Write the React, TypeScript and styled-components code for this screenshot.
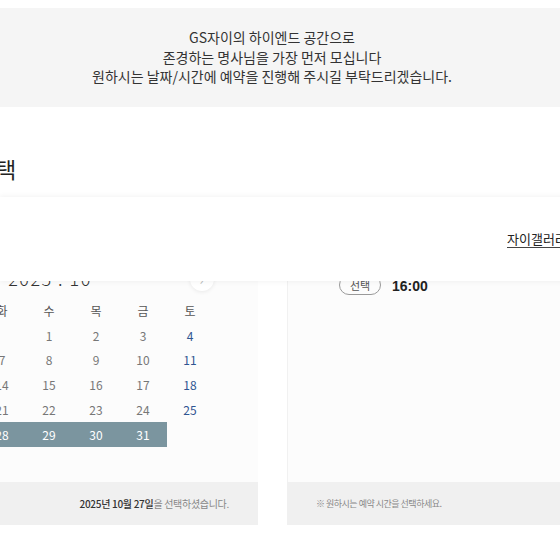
import React from "react";
import styled, { createGlobalStyle } from "styled-components";

const GlobalStyle = createGlobalStyle`
  html, body {
    margin: 0;
    padding: 0;
    background: #ffffff;
    overflow: hidden;
  }
  body {
    font-family: "Noto Sans CJK KR", "Noto Sans", sans-serif;
    color: #333;
  }
`;

const Page = styled.div`
  position: relative;
  width: 560px;
  height: 560px;
  padding-top: 8px;
  box-sizing: border-box;
  overflow: hidden;
`;

const Banner = styled.div`
  background: #f5f5f5;
  height: 99px;
  box-sizing: border-box;
  padding: 20px 16px 0 0;
  text-align: center;
  font-size: 14px;
  line-height: 19.5px;
  color: #333;
`;

const Main = styled.div`
  margin-left: -160px;
  width: 900px;
`;

const Heading = styled.h2`
  margin: 46px 0 0;
  padding-left: 45px;
  font-size: 22px;
  font-weight: 400;
  line-height: 30px;
  color: #222;
  white-space: nowrap;
`;

const Columns = styled.div`
  display: flex;
  gap: 29px;
  margin-top: 57px;
`;

const Card = styled.div<{ $width: number }>`
  width: ${(p) => p.$width}px;
  display: flex;
  flex-direction: column;
`;

const CardBody = styled.div<{ $bordered?: boolean }>`
  height: 242px;
  background: #fcfcfc;
  border-left: ${(p) => (p.$bordered ? "1px solid #f1f1f1" : "none")};
  box-sizing: border-box;
  padding-top: 24px;
`;

const CardFooter = styled.div<{ $align: "left" | "right"; $small?: boolean }>`
  height: 43px;
  background: #f0f0f0;
  display: flex;
  align-items: center;
  justify-content: ${(p) => (p.$align === "right" ? "flex-end" : "flex-start")};
  padding: 0 29px;
  font-size: ${(p) => (p.$small ? "9px" : "10px")};
  letter-spacing: ${(p) => (p.$small ? "-0.5px" : "-0.3px")};
  color: #888;
`;

const Strong = styled.span`
  color: #333;
  font-weight: 500;
`;

const CalHead = styled.div`
  width: 329px;
  margin: 0 auto;
  height: 30px;
  display: flex;
  align-items: center;
  justify-content: space-between;
`;

const YearMonth = styled.div`
  font-size: 18px;
  font-weight: 300;
  letter-spacing: 1.5px;
  color: #333;
  margin-top: -3px;
  padding-left: 2px;
`;

const ArrowButton = styled.div`
  width: 24px;
  height: 24px;
  border-radius: 50%;
  background: #fff;
  box-shadow: 0 1px 4px rgba(0, 0, 0, 0.08);
  display: flex;
  align-items: center;
  justify-content: center;
  color: #bbb;
  font-size: 14px;
`;

const Grid = styled.div`
  width: 329px;
  margin: 4px auto 0;
  display: grid;
  grid-template-columns: repeat(7, 47px);
  grid-auto-rows: 24.75px;
`;

const Dow = styled.div`
  display: flex;
  align-items: center;
  justify-content: center;
  font-size: 12px;
  color: #555;
  height: 24px;
`;

const Day = styled.div<{ $tone: "normal" | "sat" | "sun" | "picked" }>`
  display: flex;
  align-items: center;
  justify-content: center;
  font-size: 12px;
  background: ${(p) => (p.$tone === "picked" ? "#7b959f" : "transparent")};
  color: ${(p) =>
    p.$tone === "picked"
      ? "#fff"
      : p.$tone === "sat"
      ? "#2f5591"
      : p.$tone === "sun"
      ? "#c0392b"
      : "#777"};
`;

const TimeRow = styled.div`
  display: flex;
  align-items: center;
  gap: 11px;
  padding: 0 0 0 51px;
  margin-top: 11px;
`;

const Pill = styled.div`
  width: 42px;
  height: 20px;
  box-sizing: border-box;
  border: 1px solid #9a9a9a;
  border-radius: 10px;
  display: flex;
  align-items: center;
  justify-content: center;
  font-size: 11px;
  color: #555;
`;

const TimeText = styled.div`
  font-size: 14px;
  font-weight: 700;
  color: #222;
  font-family: "Liberation Sans", Arial, sans-serif;
  margin-top: 1px;
`;

const Dropdown = styled.div`
  position: absolute;
  top: 197px;
  left: 0;
  width: 620px;
  height: 84px;
  background: #fff;
  box-shadow: 0 0 6px rgba(0, 0, 0, 0.07);
  display: flex;
  align-items: center;
  padding-left: 507px;
  box-sizing: border-box;
`;

const Place = styled.span`
  font-size: 13px;
  color: #222;
  line-height: 16px;
  border-bottom: 1px solid #444;
  white-space: nowrap;
`;

const dows = ["일", "월", "화", "수", "목", "금", "토"];

const days: (number | null)[] = [
  null, null, null, 1, 2, 3, 4,
  5, 6, 7, 8, 9, 10, 11,
  12, 13, 14, 15, 16, 17, 18,
  19, 20, 21, 22, 23, 24, 25,
  26, 27, 28, 29, 30, 31, null,
];

const toneOf = (d: number | null, i: number) => {
  if (d !== null && d >= 27) return "picked" as const;
  if (i % 7 === 6) return "sat" as const;
  if (i % 7 === 0) return "sun" as const;
  return "normal" as const;
};

const App = () => {
  return (
    <Page>
      <GlobalStyle />
      <Banner>
        GS자이의 하이엔드 공간으로
        <br />
        존경하는 명사님을 가장 먼저 모십니다
        <br />
        원하시는 날짜/시간에 예약을 진행해 주시길 부탁드리겠습니다.
      </Banner>
      <Main>
        <Heading>방문 날짜 선택</Heading>
        <Columns>
          <Card $width={418}>
            <CardBody>
              <CalHead>
                <ArrowButton>‹</ArrowButton>
                <YearMonth>2025 . 10</YearMonth>
                <ArrowButton>›</ArrowButton>
              </CalHead>
              <Grid>
                {dows.map((d) => (
                  <Dow key={d}>{d}</Dow>
                ))}
                {days.map((d, i) => (
                  <Day key={i} $tone={d === null ? "normal" : toneOf(d, i)}>
                    {d ?? ""}
                  </Day>
                ))}
              </Grid>
            </CardBody>
            <CardFooter $align="right">
              <Strong>2025년 10월 27일</Strong>을 선택하셨습니다.
            </CardFooter>
          </Card>
          <Card $width={418}>
            <CardBody $bordered>
              <TimeRow>
                <Pill>선택</Pill>
                <TimeText>16:00</TimeText>
              </TimeRow>
            </CardBody>
            <CardFooter $align="left" $small>
              ※ 원하시는 예약 시간을 선택하세요.
            </CardFooter>
          </Card>
        </Columns>
      </Main>
      <Dropdown>
        <Place>자이갤러리</Place>
      </Dropdown>
    </Page>
  );
};

export default App;
